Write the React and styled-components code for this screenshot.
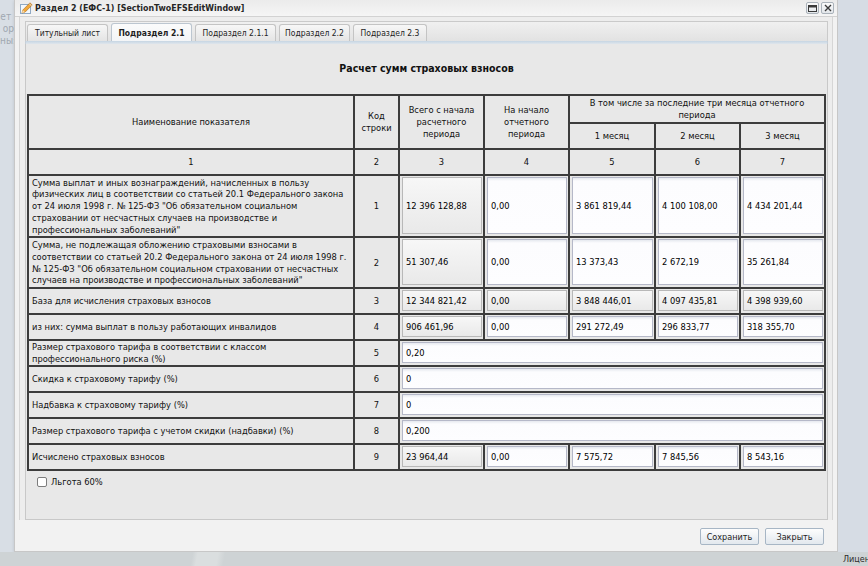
import React from "react";
import styled, { createGlobalStyle } from "styled-components";

const FONT = `"DejaVu Sans Condensed", "DejaVu Sans", "Liberation Sans", sans-serif`;

const Global = createGlobalStyle`
  html, body { margin: 0; padding: 0; }
  body { font-family: ${FONT}; font-size: 9px; color: #000; background: #d6dce4; }
`;

const Page = styled.div`
  width: 868px;
  height: 566px;
  overflow: hidden;
  display: grid;
  grid-template-columns: 14px 824px 1fr;
  grid-template-rows: 552px 1fr;
`;

const LeftStrip = styled.div`
  background: #d8dee5;
  color: #a0a8b1;
  font-size: 10px;
  line-height: 12px;
  padding-top: 11px;
  overflow: hidden;
  white-space: nowrap;
  text-align: right;
`;

const RightStrip = styled.div`
  background: #d6dce4;
`;

const BottomStrip = styled.div`
  grid-column: 1 / -1;
  background: linear-gradient(100deg, #ced3d5 0 190px, #dadedf 195px 215px, #ced3d5 222px 100%);
  color: #2b2b2b;
  font-size: 9px;
  line-height: 14px;
  padding-left: 843px;
  white-space: nowrap;
  overflow: hidden;
`;

const Window = styled.div`
  box-sizing: border-box;
  background: #f2f2f2;
  border: 1px solid #c7c7c7;
  border-top: none;
  display: flex;
  flex-direction: column;
  box-shadow: 0 1px 3px rgba(0, 0, 0, 0.12);
`;

const TitleBar = styled.div`
  height: 16px;
  display: flex;
  align-items: center;
  padding: 0 3px 0 5px;
  background: linear-gradient(#ebebeb, #f5f5f5);
  border-bottom: 1px solid #d2d2d2;
`;

const Title = styled.div`
  font-weight: bold;
  font-size: 8.8px;
  color: #262626;
  margin-left: 2px;
  flex: 1;
`;

const ToolButton = styled.div`
  width: 11px;
  height: 10px;
  margin-left: 2px;
  border: 1px solid #aab2ba;
  border-radius: 2px;
  background: linear-gradient(#fafafa, #e2e6ea);
  display: flex;
  align-items: center;
  justify-content: center;
`;

const Frame = styled.div`
  margin: 0 4px;
  border-left: 1px solid #d6d6d6;
  border-right: 1px solid #d6d6d6;
  background: #ededed;
  padding: 4px 4px 0 5px;
  display: flex;
  flex-direction: column;
  height: 503px;
  box-sizing: border-box;
`;

const TabBar = styled.div`
  height: 20px;
  box-sizing: border-box;
  border: 1px solid #cacaca;
  border-bottom: none;
  background: linear-gradient(#f0f0f0, #e2e2e2);
  display: flex;
  align-items: flex-end;
  gap: 3px;
  padding-left: 1px;
`;

const Tab = styled.div`
  box-sizing: border-box;
  width: ${(p) => p.$w}px;
  height: ${(p) => (p.$active ? 18 : 17)}px;
  border: 1px solid ${(p) => (p.$active ? "#bcc6d0" : "#c4c4c4")};
  border-bottom: none;
  border-radius: 3px 3px 0 0;
  background: ${(p) =>
    p.$active ? "linear-gradient(#fbfbfb, #f3f5f7)" : "linear-gradient(#f7f7f7, #e4e4e4)"};
  font-size: 8.5px;
  font-weight: ${(p) => (p.$active ? "bold" : "normal")};
  color: #1e1e1e;
  display: flex;
  align-items: center;
  justify-content: center;
  white-space: nowrap;
`;

const TabStrip = styled.div`
  height: 3px;
  background: linear-gradient(#c6d5e3, #dfe6ec);
  border-left: 1px solid #c6cfd8;
  border-right: 1px solid #c6cfd8;
`;

const Body = styled.div`
  flex: 1;
  box-sizing: border-box;
  background: #e8e8e8;
  border: 1px solid #c8c8c8;
  border-top: none;
  display: flex;
  flex-direction: column;
`;

const Heading = styled.div`
  height: 47px;
  padding-bottom: 3px;
  display: flex;
  align-items: center;
  justify-content: center;
  font-weight: bold;
  font-size: 10.5px;
  color: #111;
`;

const Grid = styled.table`
  width: 799px;
  margin-left: 1px;
  table-layout: fixed;
  border-collapse: separate;
  border-spacing: 0;
  border: 1px solid #3c3c3c;
  font-family: ${FONT};
  font-size: 9.25px;
`;

const Row = styled.tr`
  height: ${(p) => p.$h}px;
`;

const Cell = styled.td`
  box-sizing: border-box;
  border: 1px solid #3c3c3c;
  background: #e8e8e8;
  padding: ${(p) => (p.$field ? "1px 1px 2px 2px" : "0 3px")};
  text-align: ${(p) => p.$align || "center"};
  vertical-align: middle;
  line-height: 11.7px;
  white-space: nowrap;
  color: #111;
`;

const Field = styled.div`
  box-sizing: border-box;
  height: ${(p) => p.$h}px;
  border: 1px solid ${(p) => (p.$ro ? "#b8b8b8" : "#b5b8c8")};
  background: ${(p) =>
    p.$ro
      ? "linear-gradient(#f7f7f7, #e9e9e9)"
      : "linear-gradient(#e6e9ef 0, #fcfcfe 3px, #fdfdff 100%)"};
  display: flex;
  align-items: center;
  padding-left: 3px;
  color: #000;
  white-space: nowrap;
  overflow: hidden;
`;

const CheckRow = styled.label`
  display: flex;
  align-items: center;
  gap: 4px;
  margin: 5px 0 0 11px;
  font-size: 9.25px;
  color: #111;
`;

const CheckBox = styled.span`
  width: 8px;
  height: 8px;
  border: 1px solid #7d7d7d;
  border-radius: 2px;
  background: #fff;
`;

const Footer = styled.div`
  flex: 1;
  display: flex;
  justify-content: flex-end;
  align-items: flex-start;
  gap: 6px;
  padding: 8px 13px 0 0;
`;

const Button = styled.button`
  box-sizing: border-box;
  width: 59px;
  height: 17px;
  padding: 0;
  border: 1px solid #a7b6c5;
  border-radius: 2px;
  background: linear-gradient(#fdfdfd, #e2e8ee);
  font-family: ${FONT};
  font-size: 9px;
  color: #1c1c1c;
`;

const tabs = [
  ["Титульный лист", 81],
  ["Подраздел 2.1", 81, true],
  ["Подраздел 2.1.1", 81],
  ["Подраздел 2.2", 71],
  ["Подраздел 2.3", 74],
];

const rows = [
  {
    h: 62,
    label: [
      "Сумма выплат и иных вознаграждений, начисленных в пользу",
      "физических лиц в соответствии со статьей 20.1 Федерального закона",
      "от 24 июля 1998 г. № 125-ФЗ \"Об обязательном социальном",
      "страховании от несчастных случаев на производстве и",
      "профессиональных заболеваний\"",
    ],
    code: 1,
    vals: ["12 396 128,88", "0,00", "3 861 819,44", "4 100 108,00", "4 434 201,44"],
    ro: [1, 0, 0, 0, 0],
  },
  {
    h: 51,
    label: [
      "Сумма, не подлежащая обложению страховыми взносами в",
      "соответствии со статьей 20.2 Федерального закона от 24 июля 1998 г.",
      "№ 125-ФЗ \"Об обязательном социальном страховании от несчастных",
      "случаев на производстве и профессиональных заболеваний\"",
    ],
    code: 2,
    vals: ["51 307,46", "0,00", "13 373,43", "2 672,19", "35 261,84"],
    ro: [1, 0, 0, 0, 0],
  },
  {
    h: 26,
    label: ["База для исчисления страховых взносов"],
    code: 3,
    vals: ["12 344 821,42", "0,00", "3 848 446,01", "4 097 435,81", "4 398 939,60"],
    ro: [1, 1, 1, 1, 1],
  },
  {
    h: 26,
    label: ["из них: сумма выплат в пользу работающих инвалидов"],
    code: 4,
    vals: ["906 461,96", "0,00", "291 272,49", "296 833,77", "318 355,70"],
    ro: [1, 0, 0, 0, 0],
  },
  {
    h: 26,
    label: ["Размер страхового тарифа в соответствии с классом", "профессионального риска (%)"],
    code: 5,
    span: "0,20",
  },
  { h: 26, label: ["Скидка к страховому тарифу (%)"], code: 6, span: "0" },
  { h: 26, label: ["Надбавка к страховому тарифу (%)"], code: 7, span: "0" },
  { h: 26, label: ["Размер страхового тарифа с учетом скидки (надбавки) (%)"], code: 8, span: "0,200" },
  {
    h: 26,
    label: ["Исчислено страховых взносов"],
    code: 9,
    vals: ["23 964,44", "0,00", "7 575,72", "7 845,56", "8 543,16"],
    ro: [1, 0, 0, 0, 0],
  },
];

const lines = (arr) =>
  arr.map((l, i) => (
    <React.Fragment key={i}>
      {i > 0 && <br />}
      {l}
    </React.Fragment>
  ));

function WindowIcon() {
  return (
    <svg width="13" height="12" viewBox="0 0 13 12">
      <rect x="0.5" y="2.5" width="10" height="9" fill="#f4f8fc" stroke="#8fa9c4" />
      <path d="M2 11 L2.8 8 L10 0.8 L12.2 3 L5 10.2 Z" fill="#f2a93b" stroke="#a86414" strokeWidth="0.6" />
      <path d="M2 11 L2.8 8 L5 10.2 Z" fill="#f6dfb5" />
      <path d="M9.2 1.6 L11.4 3.8" stroke="#d9d9d9" strokeWidth="1" />
    </svg>
  );
}

function MaxIcon() {
  return (
    <svg width="9" height="7" viewBox="0 0 9 7">
      <rect x="0.5" y="0.5" width="8" height="6" fill="none" stroke="#3a3a3a" />
      <rect x="0.5" y="0.5" width="8" height="2" fill="#3a3a3a" />
    </svg>
  );
}

function CloseIcon() {
  return (
    <svg width="8" height="8" viewBox="0 0 8 8">
      <path d="M1 1 L7 7 M7 1 L1 7" stroke="#3a3a3a" strokeWidth="1.4" />
    </svg>
  );
}

export default function App() {
  return (
    <>
      <Global />
      <Page>
        <LeftStrip>
          ет&nbsp;
          <br />
          ор
          <br />
          ны:
        </LeftStrip>
        <Window>
          <TitleBar>
            <WindowIcon />
            <Title>Раздел 2 (ЕФС-1) [SectionTwoEFSEditWindow]</Title>
            <ToolButton>
              <MaxIcon />
            </ToolButton>
            <ToolButton>
              <CloseIcon />
            </ToolButton>
          </TitleBar>
          <Frame>
            <TabBar>
              {tabs.map(([t, w, a]) => (
                <Tab key={t} $w={w} $active={a}>
                  {t}
                </Tab>
              ))}
            </TabBar>
            <TabStrip />
            <Body>
              <Heading>Расчет сумм страховых взносов</Heading>
              <Grid>
                <colgroup>
                  <col style={{ width: 326 }} />
                  <col style={{ width: 45 }} />
                  <col style={{ width: 85 }} />
                  <col style={{ width: 85 }} />
                  <col style={{ width: 86 }} />
                  <col style={{ width: 85 }} />
                  <col style={{ width: 85 }} />
                </colgroup>
                <tbody>
                  <Row $h={28}>
                    <Cell rowSpan={2}>Наименование показателя</Cell>
                    <Cell rowSpan={2}>
                      Код
                      <br />
                      строки
                    </Cell>
                    <Cell rowSpan={2}>
                      Всего с начала
                      <br />
                      расчетного
                      <br />
                      периода
                    </Cell>
                    <Cell rowSpan={2}>
                      На начало
                      <br />
                      отчетного
                      <br />
                      периода
                    </Cell>
                    <Cell colSpan={3}>
                      В том числе за последние три месяца отчетного
                      <br />
                      периода
                    </Cell>
                  </Row>
                  <Row $h={26}>
                    <Cell>1 месяц</Cell>
                    <Cell>2 месяц</Cell>
                    <Cell>3 месяц</Cell>
                  </Row>
                  <Row $h={26}>
                    {[1, 2, 3, 4, 5, 6, 7].map((n) => (
                      <Cell key={n}>{n}</Cell>
                    ))}
                  </Row>
                  {rows.map((r) => (
                    <Row key={r.code} $h={r.h}>
                      <Cell $align="left">{lines(r.label)}</Cell>
                      <Cell>{r.code}</Cell>
                      {r.span !== undefined ? (
                        <Cell colSpan={5} $field $align="left">
                          <Field $h={r.h - 5}>{r.span}</Field>
                        </Cell>
                      ) : (
                        r.vals.map((v, i) => (
                          <Cell key={i} $field $align="left">
                            <Field $h={r.h - 5} $ro={r.ro[i]}>
                              {v}
                            </Field>
                          </Cell>
                        ))
                      )}
                    </Row>
                  ))}
                </tbody>
              </Grid>
              <CheckRow>
                <CheckBox />
                Льгота 60%
              </CheckRow>
            </Body>
          </Frame>
          <Footer>
            <Button>Сохранить</Button>
            <Button>Закрыть</Button>
          </Footer>
        </Window>
        <RightStrip />
        <BottomStrip>Лицензия</BottomStrip>
      </Page>
    </>
  );
}
